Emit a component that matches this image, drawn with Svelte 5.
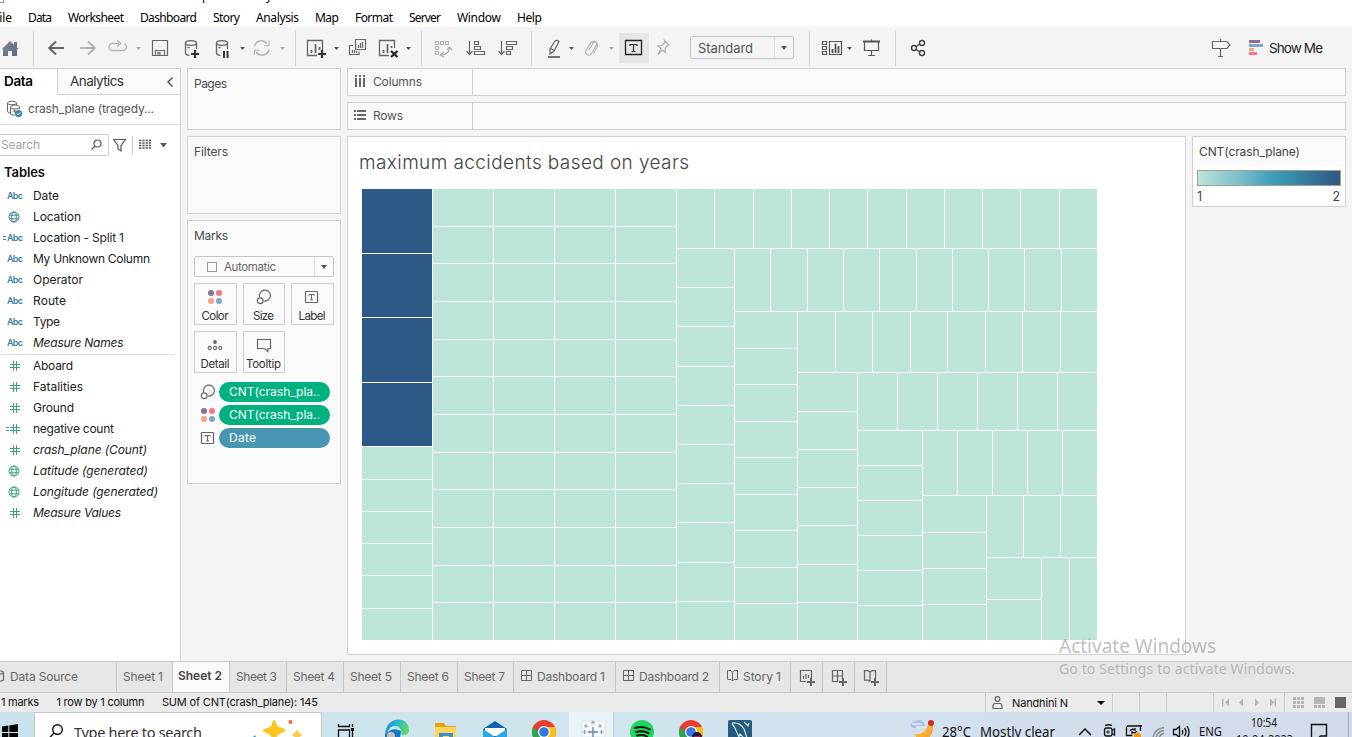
<script>
  // Adjusts tracking so that a label takes up the given number of pixels.
  function fit(node, width) {
    const range = document.createRange();
    range.selectNodeContents(node);
    const natural = range.getBoundingClientRect().width;
    const gaps = node.textContent.length - 1;
    if (!width || gaps < 1) return;
    const spacing = (width - natural) / gaps;
    node.style.letterSpacing = spacing + 'px';
    node.style.marginRight = -spacing + 'px';
  }

  const menus = [
    ['File', 19], ['Data', 24], ['Worksheet', 56], ['Dashboard', 57], ['Story', 27], ['Analysis', 43],
    ['Map', 24], ['Format', 38], ['Server', 32], ['Window', 44], ['Help', 25]
  ];

  const dimensions = [
    { name: 'Date', kind: 'abc', w: 26 },
    { name: 'Location', kind: 'geo', w: 48 },
    { name: 'Location - Split 1', kind: 'abc', calc: true, w: 91 },
    { name: 'My Unknown Column', kind: 'abc', w: 117 },
    { name: 'Operator', kind: 'abc', w: 50 },
    { name: 'Route', kind: 'abc', w: 33 },
    { name: 'Type', kind: 'abc', w: 27 },
    { name: 'Measure Names', kind: 'abc', italic: true, w: 90.5 }
  ];
  const measures = [
    { name: 'Aboard', kind: 'num', w: 40 },
    { name: 'Fatalities', kind: 'num', w: 50 },
    { name: 'Ground', kind: 'num', w: 41 },
    { name: 'negative count', kind: 'num', calc: true, w: 81 },
    { name: 'crash_plane (Count)', kind: 'num', italic: true, w: 114 },
    { name: 'Latitude (generated)', kind: 'geo', italic: true, w: 115 },
    { name: 'Longitude (generated)', kind: 'geo', italic: true, w: 125 },
    { name: 'Measure Values', kind: 'num', italic: true, w: 88 }
  ];

  const cards = [
    { name: 'Color', w: 27 }, { name: 'Size', w: 21 }, { name: 'Label', w: 27 },
    { name: 'Detail', w: 29 }, { name: 'Tooltip', w: 35 }
  ];
  const pills = [
    { icon: 'Size', text: 'CNT(crash_pla..', w: 91 },
    { icon: 'Color', text: 'CNT(crash_pla..', w: 91 },
    { icon: 'Label', text: 'Date', w: 27, blue: true }
  ];

  const sheets = [
    { name: 'Data Source', w: 68, size: 117, icon: 'source' },
    { name: 'Sheet 1', w: 40, size: 56 },
    { name: 'Sheet 2', w: 44, size: 57, active: true },
    { name: 'Sheet 3', w: 41, size: 57 },
    { name: 'Sheet 4', w: 42, size: 57 },
    { name: 'Sheet 5', w: 42, size: 57 },
    { name: 'Sheet 6', w: 42, size: 57 },
    { name: 'Sheet 7', w: 41, size: 56 },
    { name: 'Dashboard 1', w: 68, size: 102, icon: 'dash' },
    { name: 'Dashboard 2', w: 70, size: 104, icon: 'dash' },
    { name: 'Story 1', w: 38, size: 71, icon: 'story' }
  ];

  // Treemap: every strip is cut into equal tiles, leaving a 1px rule between them.
  const R = 1097, B = 640;
  const strips = [
    { x0: 361, x1: 432, y0: 188, y1: 188 + (452 * 8) / 14, n: 4, dark: true },
    { x0: 361, x1: 432, y0: 188 + (452 * 8) / 14, y1: B, n: 6 },
    { x0: 432, x1: 493, y0: 188, y1: B, n: 12 },
    { x0: 493, x1: 554, y0: 188, y1: B, n: 12 },
    { x0: 554, x1: 615, y0: 188, y1: B, n: 12 },
    { x0: 615, x1: 676, y0: 188, y1: B, n: 12 },
    { x0: 676, x1: R, y0: 188, y1: 248, n: 11, across: true },
    { x0: 676, x1: 734, y0: 248, y1: B, n: 10 },
    { x0: 734, x1: R, y0: 248, y1: 311, n: 10, across: true },
    { x0: 734, x1: 797, y0: 311.4, y1: B, n: 9 },
    { x0: 797, x1: R, y0: 311, y1: 372.4, n: 8, across: true },
    { x0: 797, x1: 857, y0: 372.4, y1: B, n: 7 },
    { x0: 857, x1: R, y0: 372.4, y1: 430, n: 6, across: true },
    { x0: 857, x1: 922, y0: 430, y1: B, n: 6 },
    { x0: 922, x1: R, y0: 430, y1: 495.4, n: 5, across: true },
    { x0: 922, x1: 986, y0: 495.4, y1: B, n: 4 },
    { x0: 986, x1: R, y0: 495.4, y1: 557, n: 3, across: true },
    { x0: 986, x1: 1041, y0: 557, y1: B, n: 2 },
    { x0: 1041, x1: R, y0: 557, y1: B, n: 2, across: true }
  ];
  const tiles = strips.flatMap((s) =>
    Array.from({ length: s.n }, (_, i) => {
      const at = (a, b, k) => Math.round(a + ((b - a) * k) / s.n);
      const l = s.across ? at(s.x0, s.x1, i) : s.x0;
      const r = s.across ? at(s.x0, s.x1, i + 1) : s.x1;
      const t = s.across ? Math.round(s.y0) : at(s.y0, s.y1, i);
      const b = s.across ? Math.round(s.y1) : at(s.y0, s.y1, i + 1);
      return { x: l + 1, y: t + 1, w: r - l - 1, h: b - t - 1, dark: s.dark };
    })
  );
</script>

{#snippet markIcon(kind)}
  {#if kind === 'Color'}
    <svg width="16" height="16" viewBox="0 0 16 16"><circle cx="4" cy="4" r="3" fill="#87709c" /><circle cx="12" cy="4" r="3" fill="#fa7384" /><circle cx="4" cy="12" r="3" fill="#f2a77d" /><circle cx="12" cy="12" r="3" fill="#82a5cb" /></svg>
  {:else if kind === 'Size'}
    <svg width="16" height="16" viewBox="0 0 16 16" fill="none" stroke="#666" stroke-width="1.2"><path d="M3.7 8.3A5.5 5.5 0 1 1 8 12" /><circle cx="4.2" cy="11.7" r="2.9" /></svg>
  {:else if kind === 'Label'}
    <svg width="16" height="16" viewBox="0 0 16 16" fill="none" stroke="#666"><rect x="1.5" y="2.5" width="12" height="11" rx=".5" stroke-width="1.2" /><path d="M5 6.7V5.5h5.2v1.2M7.5 5.5v5.2M6.2 10.8h2.8" /></svg>
  {:else if kind === 'Detail'}
    <svg width="16" height="16" viewBox="0 0 16 16" fill="none" stroke="#666" stroke-width="1.1"><circle cx="8" cy="5" r="1.9" fill="#666" stroke="none" /><circle cx="2.7" cy="11" r="1.6" /><circle cx="8" cy="11" r="1.6" /><circle cx="13.3" cy="11" r="1.6" /></svg>
  {:else}
    <svg width="16" height="16" viewBox="0 0 16 16" fill="none" stroke="#666" stroke-width="1.2"><path d="M1.5 2.5h13v9h-2.6v3l-3.4-3h-7z" /></svg>
  {/if}
{/snippet}

{#snippet fieldRow(f, color)}
  <li class="field">
    <span class="type" class:measure={color}>
      {#if f.calc}<i class="eq"></i>{/if}
      {#if f.kind === 'abc'}<b use:fit={16}>Abc</b>
      {:else if f.kind === 'geo'}
        <svg width="12" height="12" viewBox="0 0 12 12" fill="none" stroke="currentColor"><circle cx="6" cy="6" r="5" /><ellipse cx="6" cy="6" rx="2.3" ry="5" /><path d="M1.5 4.2h9M1.5 7.8h9" /></svg>
      {:else}
        <svg width="10" height="12" viewBox="0 0 10 12" fill="none" stroke="currentColor"><path d="M3.5 1v10M6.5 1v10M0 4.5h10M0 7.5h10" /></svg>
      {/if}
    </span>
    <span class="fname" class:italic={f.italic} use:fit={f.w}>{f.name}</span>
  </li>
{/snippet}

<div class="app">
  <div class="titlebar"><i class="corner"></i><span class="t1">p</span><span class="t2">y</span></div>
  <nav class="menubar">
    {#each menus as [label, w]}<span use:fit={w}>{label}</span>{/each}
  </nav>

  <div class="toolbar">
    <svg class="tools" width="690" height="41" viewBox="0 27 690 41" fill="none" stroke="#666" stroke-width="1.3">
      <defs>
        <linearGradient id="home" x1="0" y1="0" x2="1" y2="1"><stop offset="0" stop-color="#85898f" /><stop offset="1" stop-color="#56677d" /></linearGradient>
      </defs>
      <path d="M2 49 10 41l4 3.7V42h3v5.4l2 1.7h-2V56h-5v-5H8v5H3v-7z" fill="url(#home)" stroke="none" />
      <g stroke="#d0d0d0" stroke-width="1"><path d="M33.5 31v35M295.500 31v35M421.500 31v35M531.500 31v35" /></g>
      <path d="M64 48H49.500M56 41.500 49.200 48l6.800 6.500" stroke-width="2" />
      <g stroke="#b4b4b4"><path d="M80 48h14.500M88 41.500 94.800 48 88 54.500" stroke-width="2" /><path d="M119 43.500h-6.500a3.500 3.500 0 0 0 0 7h10.500a3.500 3.500 0 0 0 1.500-6.600M117 40.500l4 3-4 3" /></g>
      <g stroke="none" fill="#aaa"><path d="M136 47h5l-2.500 3zM280 47h5l-2.500 3zM609 47h5l-2.500 3z" /></g>
      <g stroke="none" fill="#555"><path d="M240 47h5l-2.500 3zM334 47h5l-2.500 3zM406 47h5l-2.500 3zM569 47h5l-2.500 3z" /></g>
      <path d="M152.500 40.500h15v15h-15zM155.500 55v-4.500h9V55M158 55v-2.500h2V55" stroke-width="1.200" />
      <g><ellipse cx="191" cy="43" rx="5.500" ry="2.300" /><path d="M185.500 43v10q0 2 4 2.300M196.500 43v6M187.500 47.500h2" /><path d="M191 54h8M195 50v8" stroke="#333" stroke-width="2.200" />
        <ellipse cx="222" cy="43" rx="5.500" ry="2.300" /><path d="M216.500 43v10q0 2 4 2.300M227.500 43v6M218.500 47.500h2" /><path d="M224 51v7M227.500 51v7" stroke="#333" stroke-width="2" /></g>
      <g stroke="#b4b4b4" stroke-width="1.500"><path d="M254.500 46a7 7 0 0 1 12.500-2.200M269 49.500a7 7 0 0 1-12.700 2.500" /><path d="M269 40.500v5.200h-5M254.500 55v-4.700h5" stroke-width="1.100" /></g>
      <path d="M317 55.500h-9.500v-15h15V50" /><path d="M311.500 50v3M315.500 44v9M319.500 47v3" stroke-width="1.800" /><path d="M318 54h8M322 50v8" stroke="#333" stroke-width="2.200" />
      <path d="M355.500 39.500h10v10h-10zM353 45.500h-3.500v9H359V51.500" stroke-width="1.200" /><path d="M358.500 45v3M360.500 43v5M362.500 42v6M352.500 50v3M354.500 50v3M356.500 51v2" stroke-width="1.200" />
      <path d="M389 55.500h-9.500v-15h15V48" /><path d="M383.500 50v3M387.500 44v9M391.500 46v2" stroke-width="1.800" /><path d="m391 51 6.500 6m0-6-6.500 6" stroke="#222" stroke-width="2.300" />
      <g stroke="#b4b4b4" stroke-width="1.100"><path d="M435.500 41.500h3v3h-3zM440.500 41.500h3v3h-3zM445.500 41.500h3v3h-3zM435.500 46.500h3v3h-3zM435.500 51.500h3v3h-3z" /><path d="M449.500 48q-.5 6.500-8 7M447 50l2.500-3 2.500 3M444 52l-3.500 3 3.500 2.500" stroke-width="1.400" /></g>
      <path d="M469.500 41v13M466.500 51l3 3.500 3-3.500M474.500 41.500h4v3h-4zM474.500 46.500h6v3h-6zM474.500 51.500h10v3h-10z" stroke-width="1.200" />
      <path d="M501.500 41v13M498.500 51l3 3.500 3-3.500M506.500 41.500h10v3h-10zM506.500 46.500h6v3h-6zM506.500 51.500h4v3h-4z" stroke-width="1.200" />
      <path d="m550 49 5-8q2-1.500 4 .5l-5 9.500-4 3zM550.500 48.500l4 2" stroke-width="1.200" /><path d="M548 57h12" stroke-width="1.800" />
      <path d="m589 50 4-7a2 2 0 0 1 3.500 2l-5 8.500a3 3 0 0 1-5.500-3l5-8a4 4 0 0 1 6.500 4l-4 7" stroke="#b4b4b4" stroke-width="1.200" />
      <path d="M619 33h30v30h-30z" fill="#e6e6e6" stroke="none" />
      <path d="M625.500 40.500h16v14h-16z" stroke="#222" /><path d="M630 46v-1.500h7V46M633.500 44.500v7M631.500 51.500h4" stroke="#333" stroke-width="1.200" />
      <path d="m664.500 40.500 4.500 4.500-1.500.5-2.500 3 .5 4-3-2.500-4.500 4.500 3-6-3-2.500 4-.5 3-3z" stroke="#b0b0b0" stroke-width="1.200" />
    </svg>
    <div class="select"><span use:fit={55}>Standard</span><i></i></div>
    <svg class="tools2" width="140" height="41" viewBox="806 27 140 41" fill="none" stroke="#555" stroke-width="1.200">
      <path d="M809.500 31v35M895.500 31v35" stroke="#d0d0d0" stroke-width="1" />
      <path d="M822.500 41.500h4v3h-4zM822.500 46.500h4v3h-4zM822.500 51.500h4v3h-4zM829.500 41.500h12v13h-12z" />
      <path d="M832.500 49v4M835.500 43.500V53M838.500 46v7" stroke-width="1.800" /><path d="M847 47h5l-2.500 3z" fill="#555" stroke="none" />
      <path d="M863 41.500h17" stroke-width="2" /><path d="M864.500 42v8.500h14V42M871.500 51v4M868 55.500h7M871.500 39.500v2" />
      <g stroke="#444" stroke-width="1.400"><circle cx="914" cy="48" r="2.500" /><circle cx="922" cy="43" r="2.500" /><circle cx="922" cy="53" r="2.500" /><path d="m916 46.500 4-2.500M916 49.500l4 2.300" /></g>
    </svg>
    <div class="showme">
      <svg width="54" height="22" viewBox="1211 37 54 22" fill="none" stroke="#666" stroke-width="1.200"><path d="M1212.500 41.500h14.500l3 3.500-3 3.500h-14.500zM1220.500 39v2M1220.500 49v7M1218 56.500h5" /><g stroke="none"><path d="M1249 40h11v3h-11z" fill="#87709c" /><path d="M1249 44h14v3h-14z" fill="#82a5cb" /><path d="M1249 48h5v3h-5z" fill="#f2a77d" /><path d="M1249 52h8v3h-8z" fill="#fa7384" /></g></svg>
      <span use:fit={54}>Show Me</span>
    </div>
  </div>

  <main class="work">
    <aside class="data">
      <div class="tabs"><b><span use:fit={29}>Data</span></b><div><span use:fit={54}>Analytics</span><svg width="8" height="12" viewBox="0 0 8 12" fill="none" stroke="#555" stroke-width="1.500"><path d="M6.500 1.500 2 6l4.500 4.500" /></svg></div></div>
      <div class="source">
        <svg width="18" height="18" viewBox="5 100 18 18" fill="none" stroke="#666"><path d="M7.500 103v8q0 2 3 2.300M16.500 103v2" /><ellipse cx="12" cy="103" rx="4.500" ry="1.800" /><path d="M10.500 107v7l4 1.500M19.500 107v2M13 111h3m-1.500-1.500v3" /><ellipse cx="15" cy="107" rx="4.500" ry="2" /><circle cx="18.500" cy="113.500" r="3.600" fill="#3c86ad" stroke="none" /><path d="m16.800 113.500 1.300 1.300 2.200-2.500" stroke="#fff" /></svg>
        <span use:fit={126}>crash_plane (tragedy...</span>
      </div>
      <div class="finder">
        <div class="search"><span use:fit={39}>Search</span><svg width="12" height="12" viewBox="0 0 12 12" fill="none" stroke="#555" stroke-width="1.200"><circle cx="7.500" cy="4.500" r="3.500" /><path d="M5 7 1.500 10.500" /></svg></div>
        <svg width="58" height="18" viewBox="113 135 58 18" fill="none" stroke="#555" stroke-width="1.200"><path d="M113.500 138.500h12l-4.500 6v5.500l-3-2v-3.500z" /><path d="M132.500 135v18" stroke="#ccc" /><path d="M139 139.500h12M139 142h12M139 144.500h12M139 147h12" stroke-dasharray="2.300 1" stroke-width="1.300" /><path d="M160 142h7l-3.500 4.500z" fill="#555" stroke="none" /></svg>
      </div>
      <h2><span use:fit={41}>Tables</span></h2>
      <ul>{#each dimensions as f}{@render fieldRow(f, false)}{/each}</ul>
      <hr />
      <ul>{#each measures as f}{@render fieldRow(f, true)}{/each}</ul>
    </aside>

    <section class="shelves">
      <div class="card pages"><span use:fit={33}>Pages</span></div>
      <div class="card filters"><span use:fit={34}>Filters</span></div>
      <div class="card marks">
        <span use:fit={34}>Marks</span>
        <div class="marktype"><em></em><span use:fit={52}>Automatic</span><i></i></div>
        <div class="grid">
          {#each cards as c}
            <div class="cell">{@render markIcon(c.name)}<span use:fit={c.w}>{c.name}</span></div>
          {/each}
        </div>
        {#each pills as p}
          <div class="pillrow">{@render markIcon(p.icon)}<div class="pill" class:blue={p.blue}><span use:fit={p.w}>{p.text}</span></div></div>
        {/each}
      </div>
    </section>

    <section class="view">
      <div class="shelf"><div><svg width="14" height="14" viewBox="0 0 14 14" fill="#666" shape-rendering="crispEdges"><path d="M1 0h2v2H1zM1 3h2v9H1zM5 0h2v2H5zM5 3h2v9H5zM9 0h2v2H9zM9 3h2v9H9z" /></svg><span use:fit={49}>Columns</span></div></div>
      <div class="shelf"><div><svg width="14" height="14" viewBox="0 0 14 14" fill="#666" shape-rendering="crispEdges"><path d="M0 1h2v2H0zM3 1h9v2H3zM0 5h2v2H0zM3 5h9v2H3zM0 9h2v2H0zM3 9h9v2H3z" /></svg><span use:fit={30}>Rows</span></div></div>
      <div class="row">
        <div class="canvas">
          <h1><span use:fit={330}>maximum accidents based on years</span></h1>
          <svg class="treemap" width="736" height="452" viewBox="361 188 736 452" shape-rendering="crispEdges">
            {#each tiles as t}<rect x={t.x} y={t.y} width={t.w} height={t.h} fill={t.dark ? '#2c5985' : '#bce4d8'} />{/each}
          </svg>
        </div>
        <div class="legend">
          <div class="ltitle"><span use:fit={101}>CNT(crash_plane)</span></div>
          <div class="ramp"></div>
          <div class="ends"><span>1</span><span>2</span></div>
        </div>
      </div>
    </section>
  </main>

  <div class="sheets">
    {#each sheets as s}
      <div class="sheet" class:active={s.active} class:source-tab={s.icon === 'source'} style:width="{s.size}px">
        {#if s.icon === 'source'}
          <svg width="5" height="12" viewBox="0 0 5 12" fill="none" stroke="#666" stroke-width="1.200"><path d="M0 1q3.500 0 3.500 1.500v7Q3.500 11 0 11M0 4q3.500 0 3.500-1.500" /></svg>
        {:else if s.icon === 'dash'}
          <svg width="12" height="12" viewBox="0 0 12 12" fill="none" stroke="#666"><path d="M.5.500h10v10H.5zM5.500.500v10M.5 5.500h10" /></svg>
        {:else if s.icon === 'story'}
          <svg width="12" height="12" viewBox="0 0 12 12" fill="none" stroke="#666"><path d="M5.500 11V2.300L4 .500H.5v9h3.500L5.500 11 7 9.500h3.500v-9H7L5.500 2.300" /></svg>
        {/if}
        <span use:fit={s.w}>{s.name}</span>
      </div>
    {/each}
    <div class="add"><svg width="16" height="16" viewBox="0 0 16 16" fill="none" stroke="#666" stroke-width="1.200"><path d="M7 11.500H1.500v-11h11V8M4.500 6v3M7 4v5M9.500 5v3" /><path d="M8 12h8M12 8v8" stroke-width="2" /></svg></div>
    <div class="add"><svg width="16" height="16" viewBox="0 0 16 16" fill="none" stroke="#666" stroke-width="1.200"><path d="M7.500 11.500h-6v-11h10V8M6.500.500v11M1.500 6h10" /><path d="M8 12h8M12 8v8" stroke-width="2" /></svg></div>
    <div class="add"><svg width="16" height="16" viewBox="0 0 16 16" fill="none" stroke="#666" stroke-width="1.200"><path d="M7 11.500V2.200L5 .600H1.500v9.500H5l2 1.400M7 2.200 9 .600h3.500V8" /><path d="M8 12h8M12 8v8" stroke-width="2" /></svg></div>
  </div>

  <footer class="status">
    <div class="counts"><span use:fit={38}>1 marks</span><span use:fit={88}>1 row by 1 column</span><span use:fit={156}>SUM of CNT(crash_plane): 145</span></div>
    <div class="user"><svg width="12" height="14" viewBox="0 0 12 14" fill="none" stroke="#666" stroke-width="1.200"><circle cx="5.500" cy="3" r="2.400" /><path d="M1 12.500V10q0-2.500 2-2.500h5q2 0 2 2.500v2.500z" /></svg><span use:fit={56}>Nandhini N</span><i></i></div>
    <div class="slot"></div><div class="slot"></div><div class="slot wide"></div>
    <div class="pager"><svg width="56" height="9" viewBox="0 0 56 9" fill="#b5b5b5"><path d="M0 .500h1.500v8H0zM7 .500v8l-4-4zM21 .500v8l-4-4zM33 .500v8l4-4zM48 .500v8l4-4zM52.500.500H54v8h-1.500z" /></svg></div>
    <div class="modes"><svg width="54" height="12" viewBox="0 0 54 12" fill="#b5b5b5"><path d="M0 0h3v3H0zM4 0h3v3H4zM8 0h3v3H8zM0 4h3v3H0zM4 4h3v3H4zM8 4h3v3H8zM0 8h3v3H0zM4 8h3v3H4zM8 8h3v3H8zM21 0h11v7H21zM21 8h3v3h-3zM25 8h3v3h-3zM29 8h3v3h-3z" /><path d="M42 0h11v11H42z" fill="#666" /></svg></div>
  </footer>

  <div class="taskbar">
    <div class="start"><svg width="16" height="17" viewBox="0 0 16 17"><path d="M0 2.500 6.300 1.500V8H0zM7.300 1.400 16 0v8H7.300zM0 9h6.300v6.800L0 14.800zM7.300 9H16v8l-8.700-1.200z" /></svg></div>
    <div class="find">
      <svg width="14" height="15" viewBox="0 0 14 15" fill="none" stroke="#111" stroke-width="1.400"><circle cx="8.500" cy="5.500" r="4.800" /><path d="M5 9 0 14.500" /></svg>
      <span use:fit={128}>Type here to search</span>
      <svg class="spark" width="52" height="20" viewBox="252 717 52 20"><path d="M274 720q1.500 0 2.500 4.500 1 2 6 3.500 3 1 3 2.300t-4 2.700q-4 1.500-5 4h-5q-1-2.500-5-4-3.500-1-3.500-2.300t4-2.700q4.500-1.500 5-3.500.5-4.500 2-4.500z" fill="#fbc620" /><path d="M297 730q1.200 0 1.700 2.700 3.300 1.300 3.300 2.300t-3 2h-4q-3-1-3-2t3.300-2.300q.8-2.700 1.700-2.700z" fill="#fbc84a" /><circle cx="290.500" cy="722" r="2" fill="#f26a32" /><path d="m253 737 2-2 1 2z" fill="#2b9be0" /></svg>
    </div>
    <svg class="pins" width="588" height="25" viewBox="322 712 588 25">
      <defs>
        <linearGradient id="edge" x1="0" y1="0" x2="1" y2=".3"><stop offset="0" stop-color="#1681cf" /><stop offset=".5" stop-color="#24b5d3" /><stop offset="1" stop-color="#62d66b" /></linearGradient>
      </defs>
      <path d="M338.500 724v2.500h11V724M338.500 738v-8h11v8M352.500 724v3M352.500 731v6" fill="none" stroke="#111" stroke-width="1.300" /><path d="M351 728h3v3h-3z" />
      <path d="M385 736c0-21 24-21 24-6 0 5-5 6-8 4 2-6-5-10-10-7q-5 4-3 10h-3z" fill="url(#edge)" /><path d="M385 735q7-9 16-4l-1 7h-15z" fill="#1379c5" /><circle cx="391" cy="736" r="4" fill="#cbbfba" />
      <path d="M435 723h9l2 3h10v12h-21z" fill="#e8a211" /><path d="M435 727h21v11h-21z" fill="#ffd45d" /><path d="M439 733h14v5h-14z" fill="#3890d0" /><path d="M443 736h6v2h-6z" fill="#ffd45d" />
      <path d="m483 729 12-8 12 8v9h-24z" fill="#0864b1" /><path d="M485 728h20v8h-20z" fill="#fff" /><path d="m483 729 12 8 12-8v9h-24z" fill="#27a7e8" />
      <circle cx="544" cy="732" r="12" fill="#e63e31" /><path d="M544 732h12a12 12 0 0 1-12 12z" fill="#fbc116" /><path d="M544 727h11a12 12 0 0 1 1 5l-5 6z" fill="#fbc116" /><path d="M533 727a12 12 0 0 0 11 17l-2-9z" fill="#2ca54d" /><circle cx="544" cy="732" r="6" fill="#fff" /><circle cx="544" cy="732" r="4.800" fill="#3478e5" />
      <path d="M569 712h44v25h-44z" fill="#eaf3f8" /><path d="M613.500 712v25" stroke="#bad0da" /><path d="M582 721h23v16h-23z" fill="#fafafa" stroke="#d7dadc" stroke-width=".6" />
      <g stroke="#5284ad" stroke-width="1.300"><path d="M593 727v10M588 732h10" /><path d="M593 720.500v4M591 722.500h4M586 724v4M584 726h4M600 724v4M598 726h4M584.500 730v4M582.500 732h4M601.500 730v4M599.500 732h4" stroke-width="1" opacity=".75" /></g>
      <circle cx="642" cy="732" r="12" fill="#1ed760" /><g fill="none" stroke="#111" stroke-width="2" stroke-linecap="round"><path d="M635 728q8-2.500 15 1.500M636 732q7-2 12.500 1.200M637 735.500q6-1.500 10 1" /></g>
      <circle cx="691" cy="732" r="12" fill="#e63e31" /><path d="M691 727h11a12 12 0 0 1 1 5 12 12 0 0 1-12 12z" fill="#fbc116" /><path d="M680 727a12 12 0 0 0 11 17l-2-9z" fill="#2ca54d" /><circle cx="691" cy="732" r="6" fill="#fff" /><circle cx="691" cy="732" r="4.800" fill="#3478e5" /><circle cx="697" cy="737" r="5" fill="#28103f" /><path d="M694 737h6" stroke="#ee4471" />
      <rect x="728" y="720" width="24" height="20" rx="2" fill="#235b7c" /><path d="M732 723q8-1 12 6l3 9M734 726l5 11 1-3 3 3M732 723l2 4M744 722l4 4 1-3" fill="none" stroke="#d8e7ef" stroke-width="1.200" />
    </svg>
    <svg class="tray" width="442" height="25" viewBox="910 712 442 25" fill="none" stroke="#111" stroke-width="1.300">
      <defs><linearGradient id="sun" x1="0" y1="0" x2="1" y2="1"><stop offset="0" stop-color="#ffd056" /><stop offset="1" stop-color="#f69b22" /></linearGradient></defs>
      <g stroke="none"><path d="M929 721q6 4 3 12l-3 5h-12l-3-4q12 2 15-13z" fill="url(#sun)" /><path d="M913 728a3 3 0 0 1 1-6q1-2 5-2 4 0 4.500 3a3 3 0 0 1 0 5z" fill="#a7bfec" /><path d="M912 724h10M916 727h9" stroke="#e5edfa" /><circle cx="931" cy="723" r="3" fill="#c72d1d" /></g>
      <path d="m1079 735 6-6 6 6" stroke-width="1.500" />
      <rect x="1104.500" y="728" width="7.500" height="8" rx="2" /><path d="M1112 730.500l2.500-1.500v6l-2.500-1.500M1105 725.500q4-1.500 7 0" /><circle cx="1108" cy="732" r="1.200" stroke-width="1" />
      <path d="M1127 726h15M1126.500 726.500v9h6M1140.500 725v6" /><path d="M1130 731q2-3 5-1v-2M1137 731q-2 3-5 1v2" /><circle cx="1137.500" cy="736" r="3.500" fill="#f7980a" stroke="none" />
      <g stroke="#888"><path d="M1153 738q1-9 11-10.500M1156 738q1-6.500 8-7.500M1159 738q1-4 5-4.500" /></g>
      <path d="M1173.500 729.500h2.500l3.500-3v11l-3.500-3h-2.500zM1182 730q1.500 2 0 4.500M1184.500 728q3 4 0 8M1187 726q4 6 0 12" />
      <path d="M1311.500 738v-13.500h15V736h-6l-2 2" stroke-width="1.400" /><path d="M1348.500 712v25" stroke="#a9b3c4" />
      <g class="traytext" fill="#111" stroke="none">
        <text x="942" y="737" font-size="14.500" textLength="29" lengthAdjust="spacingAndGlyphs">28°C</text>
        <text x="980" y="737" font-size="14.500" textLength="75" lengthAdjust="spacingAndGlyphs">Mostly clear</text>
        <text x="1199" y="736.300" font-size="12.500" textLength="23" lengthAdjust="spacingAndGlyphs">ENG</text>
        <text x="1251" y="727" font-size="12" textLength="26" lengthAdjust="spacingAndGlyphs">10:54</text>
        <text x="1236" y="744" font-size="12" textLength="57" lengthAdjust="spacingAndGlyphs">10-04-2023</text>
      </g>
    </svg>
  </div>

  <div class="watermark"><p class="w1"><span use:fit={157}>Activate Windows</span></p><p class="w2"><span use:fit={236}>Go to Settings to activate Windows.</span></p></div>
</div>

<style>
  :global(body) { overflow: hidden; background: #f5f5f5; }
  .app { position: relative; width: 1352px; height: 737px; overflow: hidden; display: flex; flex-direction: column; background: #f4f4f4; font: 12px/16px Inter, "Liberation Sans", sans-serif; color: #444; }
  .app * { box-sizing: border-box; }
  span { white-space: nowrap; }
  svg { display: block; flex: none; }
  ul, p, h1, h2 { margin: 0; padding: 0; list-style: none; }

  .titlebar { height: 8px; background: #fff; display: flex; overflow: hidden; font: 12px/16px "Noto Sans", sans-serif; color: #000; }
  .titlebar span { margin-top: -12px; width: 8px; }
  .corner { width: 4px; height: 3px; border: solid #999; border-width: 0 1px 1px 0; }
  .t1 { margin-left: 198px; }
  .t2 { margin-left: 56px; }
  .menubar { height: 19px; background: #fff; display: flex; gap: 16px; font: 12px/20px "Noto Sans", sans-serif; color: #000; }
  .menubar span:first-child { margin-left: -7px; }
  .toolbar { height: 41px; display: flex; align-items: center; border-top: 1px solid #eee; background: #f4f4f4; flex: none; }
  .tools, .tools2 { margin-top: -1px; }
  .select { width: 104px; height: 23px; margin-top: -1px; border: 1px solid #c4c4c4; border-radius: 2px; display: flex; align-items: center; justify-content: space-between; padding-left: 7px; font-size: 13px; color: #555; }
  .select i { width: 19px; height: 21px; border-left: 1px solid #ddd; display: grid; place-items: center; }
  .select i::after, .marktype i::after, .user i::after { content: ""; border: 3.5px solid transparent; border-top: 4px solid #555; border-bottom: 0; }
  .tools2 { margin-left: 12px; }
  .showme { margin: -1px 0 0 auto; display: flex; align-items: center; gap: 4px; padding-right: 29px; font-size: 13.500px; color: #222; }

  .work { height: 593px; display: flex; flex: none; }
  .data { width: 181px; background: #fff; border-right: 1px solid #d0d0d0; border-top: 1px solid #d0d0d0; overflow: hidden; }
  .tabs { height: 26px; display: flex; font-size: 13.500px; line-height: 25px; }
  .tabs b { width: 57px; padding-left: 4px; color: #000; font-weight: 600; }
  .tabs div { flex: 1; display: flex; align-items: center; justify-content: space-between; padding: 0 6px 0 12px; border: solid #d0d0d0; border-width: 0 0 1px 1px; background: #fafafa; color: #333; }
  .source { height: 30px; display: flex; align-items: center; gap: 5px; padding-left: 5px; padding-bottom: 1px; border-bottom: 1px solid #ddd; color: #555; }
  .finder { display: flex; align-items: center; gap: 4px; height: 22px; margin-top: 9px; }
  .search { width: 109px; height: 22px; padding: 0 6px 0 1px; border: solid #ccc; border-width: 1px 1px 1px 0; border-radius: 0 2px 2px 0; display: flex; align-items: center; justify-content: space-between; color: #a3a3a3; }
  h2 { font-size: 13px; line-height: 18px; color: #111; font-weight: 600; padding: 7px 0 0 4px; height: 29.5px; }
  .field { display: flex; align-items: center; height: 21px; color: #222; }
  .type { width: 33px; padding-right: 10px; height: 21px; display: flex; align-items: center; justify-content: flex-end; gap: 1px; color: #3c82a2; }
  .type svg { margin-right: 3px; }
  .type b { font-size: 9px; font-weight: 600; }
  .type.measure { color: #38a678; }
  .eq { width: 3px; height: 4px; border: solid currentColor; border-width: 1px 0; }
  .italic { font-style: italic; }
  hr { height: 1px; margin: .5px 6px 0.500px 1px; border: 0; background: #ddd; }

  .shelves { width: 154px; margin-left: 6px; display: flex; flex-direction: column; gap: 6px; flex: none; }
  .card { border: 1px solid #d0d0d0; background: #fafafa; padding: 7px 6px; color: #4a4a4a; }
  .pages { height: 62px; }
  .filters { height: 78px; }
  .marks { height: 264px; }
  .marktype { display: flex; align-items: center; height: 21px; width: 140px; margin: 12px 0 6px; border: 1px solid #c6c6c6; border-radius: 2px; padding-left: 12px; color: #666; font-size: 11.500px; }
  .marktype em { width: 10px; height: 10px; border: 1px solid #999; margin-right: 7px; }
  .marktype i { margin-left: auto; width: 19px; height: 19px; border-left: 1px solid #ddd; display: grid; place-items: center; }
  .grid { display: grid; grid-template-columns: 43px 42px 43px; gap: 6px; margin-bottom: 7px; }
  .cell { height: 42px; border: 1px solid #ccc; display: flex; flex-direction: column; align-items: center; padding: 5px 1px 0 0; gap: 3px; font-size: 11.500px; color: #333; }
  .pillrow { display: flex; align-items: center; gap: 3px; padding-left: 6px; height: 23px; }
  .pill { width: 111px; height: 20px; border-radius: 10px; background: #00b180; color: #fff; padding-left: 10px; line-height: 20px; }
  .pill.blue { background: #4996b2; }

  .view { margin-left: 6px; width: 999px; display: flex; flex-direction: column; gap: 6px; }
  .shelf { height: 28px; border: 1px solid #d0d0d0; background: #fafafa; }
  .shelf div { width: 125px; height: 26px; border-right: 1px solid #d0d0d0; display: flex; align-items: center; gap: 5px; padding-left: 6px; color: #555; }
  .row { display: flex; gap: 6px; align-items: flex-start; }
  .canvas { width: 839px; height: 519px; background: #fff; border: 1px solid #d0d0d0; padding: 14px 0 0 11px; }
  h1 { height: 37px; font-size: 19px; line-height: 24px; font-weight: 300; color: #444; }
  .treemap { margin-left: 2px; }
  .legend { width: 154px; height: 71px; border: 1px solid #d0d0d0; background: #fff; }
  .ltitle { height: 29px; background: #fafafa; padding: 7px 6px; }
  .ramp { margin: 4px 4px 0; height: 16px; border: 1px solid #a5a08e; background: linear-gradient(90deg, #bce4d8, #79bdca 30%, #45a2b9 50%, #3890ae 63%, #35688f 88%, #2c5985); }
  .ends { display: flex; justify-content: space-between; padding: 2.5px 5px 0 4px; font-size: 12.500px; }

  .sheets { height: 32px; flex: none; display: flex; background: #e6e6e6; border: solid #c8c8c8; border-width: 1px 0; color: #666; }
  .sheet { display: flex; align-items: center; gap: 4px; padding-left: 6px; border-right: 1px solid #c8c8c8; height: 30px; font-size: 12px; }
  .sheet svg { margin: -2px 0 0 1px; }
  .source-tab { padding-left: 0; gap: 5px; }
  .sheet.source-tab svg { margin-left: 0; }
  .active { background: #fafafa; color: #444; font-weight: 600; padding-left: 5px; padding-bottom: 2px; }
  .add { width: 32px; height: 30px; border-right: 1px solid #c8c8c8; padding: 8px 0 0 8px; }
  .status { height: 19px; flex: none; background: #ebebeb; display: flex; font-size: 11px; line-height: 18px; color: #111; }
  .counts { width: 985px; display: flex; gap: 17.5px; padding-left: 1px; }
  .user { width: 127px; border-left: 1px solid #ccc; display: flex; align-items: center; padding: 0 7px 0 6px; gap: 8px; }
  .user i { margin-left: auto; display: flex; }
  .user i::after { border-top-color: #000; border-width: 4px 4px 0; }
  .slot { width: 27px; border-left: 1px solid #ccc; }
  .slot.wide { width: 47px; }
  .pager { width: 71px; border-left: 1px solid #ccc; padding: 5px 0 0 8px; }
  .modes { border-left: 1px solid #ccc; padding: 4px 0 0 8px; }

  .taskbar { height: 25px; flex: none; display: flex; background: linear-gradient(90deg, #c9e2eb, #d0e5ee 45%, #d3e0ee 70%, #d4dae9); }
  .start { width: 34px; padding: 12px 0 0 2px; overflow: hidden; }
  .find { width: 288px; height: 25px; overflow: hidden; background: #fff; border: solid #bfc8cc; border-width: 1px 1px 0; display: flex; align-items: flex-start; padding: 9px 0 0 14px; font: 14.500px/20px "Noto Sans", sans-serif; color: #333; }
  .find > svg:first-child { margin-top: 2px; }
  .find span { margin-left: 11px; }
  .find .spark { margin: -5px 17px 0 auto; }
  .traytext { font-family: "Noto Sans", sans-serif; }

  .watermark { position: absolute; left: 1059px; top: 634px; font-family: "Noto Sans", sans-serif; color: rgba(150, 150, 150, .62); }
  .w1 { font-size: 19px; line-height: 25px; }
  .w2 { font-size: 14px; line-height: 20px; }
</style>
